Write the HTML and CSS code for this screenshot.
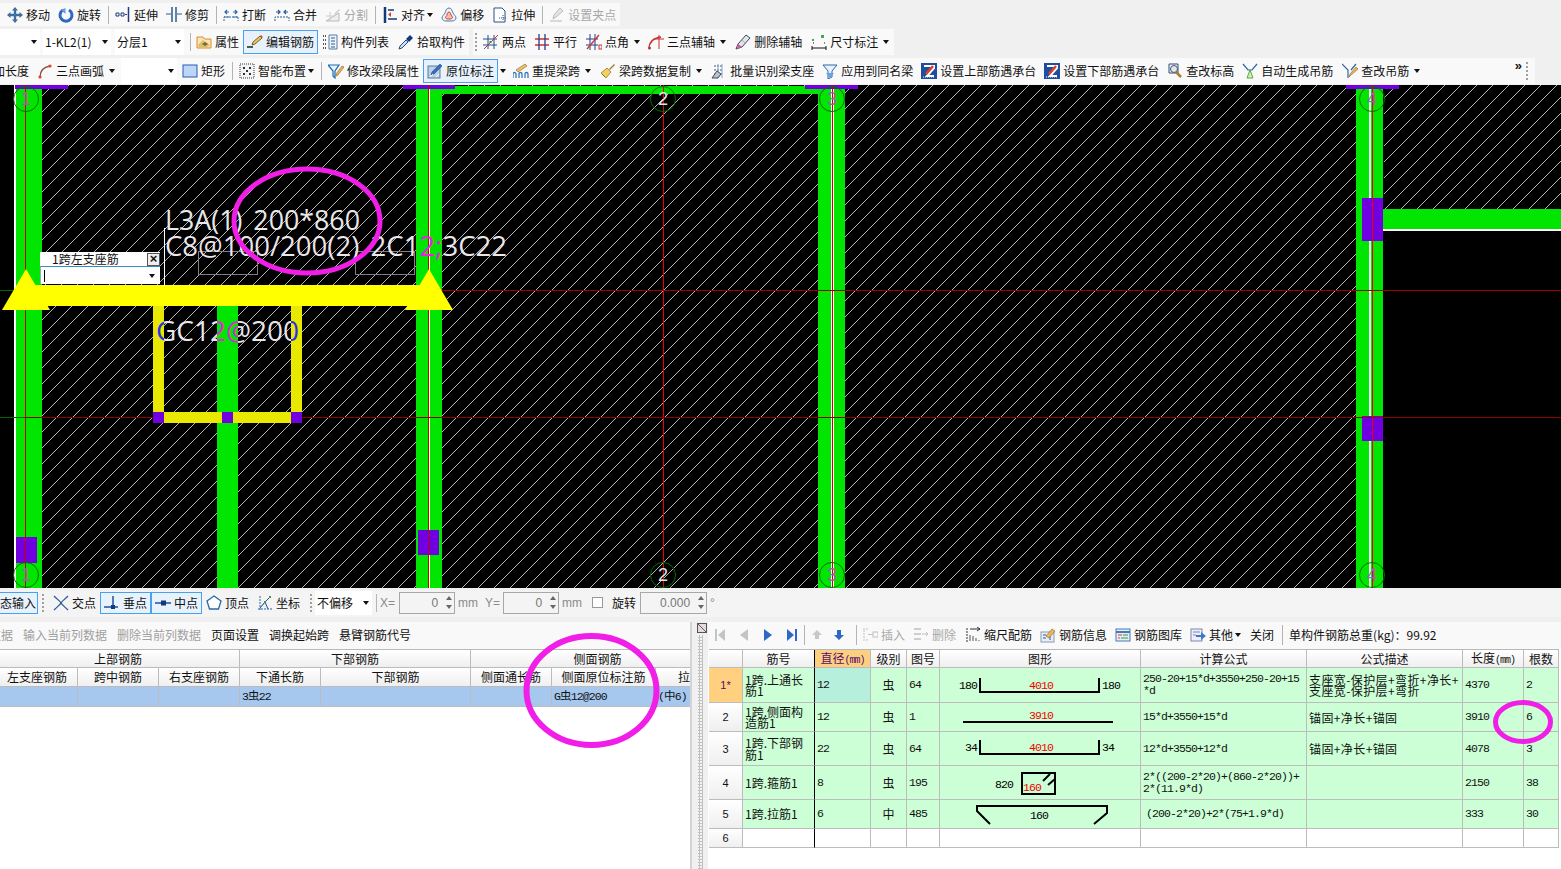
FILE: index.html
```html
<!DOCTYPE html>
<html lang="zh">
<head>
<meta charset="utf-8">
<title>钢筋编辑</title>
<link rel="stylesheet" href="styles.css">
</head>
<body>
<svg class="defs" aria-hidden="true">
<symbol id="i-move" viewBox="0 0 16 16"><path d="M8 0l3 3.500H9.200v3.300h3.300V5L16 8l-3.500 3v-1.800H9.200v3.300H11L8 16l-3-3.500h1.800V9.200H3.500V11L0 8l3.500-3v1.800h3.300V3.500H5z" fill="#3f6f9f"/></symbol>
<symbol id="i-rotate" viewBox="0 0 16 16"><path d="M5 3a6 6 0 1 0 6 0" fill="none" stroke="#2c68c4" stroke-width="3"/><path d="M7.500 1v6L3 3z" fill="#6a98dc"/></symbol>
<symbol id="i-extend" viewBox="0 0 16 16"><path d="M1 6h3v3H1zM6 6h3v3H6z" fill="none" stroke="#1d3f7a"/><path d="M10 7.500h2" stroke="#1d3f7a"/><path d="M13.500 0v15" stroke="#1d3f7a" stroke-width="1.500"/></symbol>
<symbol id="i-trim" viewBox="0 0 16 16"><path d="M6 0v15M10 0v15" stroke="#2c5a94" stroke-width="1.500"/><path d="M0 7h5M11 7h5" stroke="#2c5a94"/></symbol>
<symbol id="i-break" viewBox="0 0 16 16"><path d="M1 14V10h14v4M1 10h5M10 10h5" fill="none" stroke="#2c68a4" stroke-dasharray="2 1"/><path d="M2 5h4M14 5h-4M4 3L2 5l2 2M12 3l2 2-2 2" fill="none" stroke="#2c68a4" stroke-width="1.200"/></symbol>
<symbol id="i-merge" viewBox="0 0 16 16"><path d="M1 14V10h14v4" fill="none" stroke="#2c5a94" stroke-dasharray="2 1"/><path d="M2 5h4M14 5h-4M4 3l2 2-2 2M12 3l-2 2 2 2" fill="none" stroke="#2c5a94" stroke-width="1.200"/></symbol>
<symbol id="i-split" viewBox="0 0 16 16"><path d="M1 14h13V6L1 14z" fill="#eee" stroke="#bbb"/><path d="M9 7l5-5 1 1-5 5z" fill="#ccc"/><path d="M1 9h9M5 5v9" stroke="#ccc"/></symbol>
<symbol id="i-align" viewBox="0 0 16 16"><path d="M3 0v16" stroke="#123a7a" stroke-width="2.500"/><path d="M6 3h6M6 12h9" stroke="#123a7a" stroke-width="1.500"/><path d="M9 5l-3 2.500L9 10z" fill="#d04030"/></symbol>
<symbol id="i-offset" viewBox="0 0 16 16"><path d="M8 1c3 0 3 3 4 5s3 3 3 5-2 3-4 3H5c-2 0-4-1-4-3s2-3 3-5 1-5 4-5z" fill="#eef2f8" stroke="#4d7aa8"/><path d="M8 5c1.500 0 1.500 2 2 3s1.500 1.500 1.500 2.500S10 12 9 12H7c-1 0-2.500-.5-2.500-1.500S6 9 6 8s.5-3 2-3z" fill="#f4c0b0" stroke="#d04030"/></symbol>
<symbol id="i-stretch" viewBox="0 0 16 16"><path d="M2 1h8l3 3v11H2z" fill="#fff" stroke="#2c4f84"/><path d="M7 11h7M11 8v6" stroke="#2c4f84" stroke-dasharray="1 1"/></symbol>
<symbol id="i-grip" viewBox="0 0 16 16"><path d="M1 14h12" stroke="#ccc" stroke-width="1.500"/><path d="M4 12l1-4 6-7 3 3-7 6z" fill="#e4e4e4" stroke="#bbb"/></symbol>
<symbol id="i-attr" viewBox="0 0 16 16"><path d="M1 3h6l1.500 2H15v9H1z" fill="#fbe4b8" stroke="#e08a2c"/><path d="M2 11l5-5 7 5-4 3H3z" fill="#d8c070"/><path d="M6 10l3-2 3 2-3 2z" fill="#7d6a30"/></symbol>
<symbol id="i-edit" viewBox="0 0 16 16"><path d="M0 13h6" stroke="#222" stroke-width="1.500"/><path d="M5 11l1-3 7-6 2 2-7 6z" fill="#e8c466" stroke="#7a6020"/><path d="M13 2l2 2 1-1-2-2z" fill="#c05a40"/></symbol>
<symbol id="i-list" viewBox="0 0 16 16"><path d="M1 2h3M1 6h3M1 10h3M1 14h3" stroke="#555" stroke-dasharray="1 1" stroke-width="2"/><path d="M7 1h8v14H7z" fill="#eef4fb" stroke="#5a7da8"/><path d="M9 4h4M9 7h4M9 10h4M9 13h4" stroke="#2c5a94"/></symbol>
<symbol id="i-pick" viewBox="0 0 16 16"><path d="M1 15l1-3 6-6 2 2-6 6z" fill="#cfe0f4" stroke="#224f90"/><path d="M8 5l4-4 3 3-4 4z" fill="#123a7a"/></symbol>
<symbol id="i-two" viewBox="0 0 16 16"><path d="M0 5h14M0 11h14" stroke="#22508c"/><path d="M5 1v14M11 1v14" stroke="#22508c"/><path d="M1 15L15 1" stroke="#d03030"/><rect x="6.500" y="7" width="2" height="2" fill="#3a9a3a"/></symbol>
<symbol id="i-par" viewBox="0 0 16 16"><path d="M1 5h14M1 11h14" stroke="#d03030" stroke-width="1.300"/><path d="M5 0v16M11 0v16" stroke="#22408c" stroke-width="1.300"/></symbol>
<symbol id="i-ang" viewBox="0 0 16 16"><path d="M0 5h12M0 11h12M4 0v16M9 0v16" stroke="#22408c"/><path d="M1 15L13 1" stroke="#d03030" stroke-width="1.300"/><rect x="13" y="11" width="3" height="4" fill="none" stroke="#d03030"/></symbol>
<symbol id="i-aux" viewBox="0 0 16 16"><path d="M1 15C1 8 5 4 13 3" fill="none" stroke="#d03030" stroke-width="1.300"/><path d="M6 5h10M11 1v14" stroke="#c83030"/><circle cx="1.500" cy="14" r="1.500" fill="#b04030"/></symbol>
<symbol id="i-del" viewBox="0 0 16 16"><path d="M1 15l2-5 8-9 4 3-8 9z" fill="#dfe4ee" stroke="#3a4a6a"/><path d="M3 10l4 3-5 2z" fill="#d45a8a"/><path d="M7 6l3 3" stroke="#e0b040"/></symbol>
<symbol id="i-dim" viewBox="0 0 16 16"><path d="M1 12v4M15 12v4M1 14h14" stroke="#111"/><path d="M2 9h1M2 6h1M13 9h1" stroke="#111"/><rect x="10" y="1" width="3" height="3" fill="#4aa84a"/><rect x="1" y="5" width="2" height="2" fill="#4aa84a"/></symbol>
<symbol id="i-arc" viewBox="0 0 16 16"><path d="M3 14C3 8 7 4 13 3" fill="none" stroke="#8a5040" stroke-width="1.300"/><circle cx="3" cy="14" r="1.600" fill="#e04030"/><circle cx="13" cy="3" r="1.600" fill="#e04030"/></symbol>
<symbol id="i-rect" viewBox="0 0 16 16"><rect x="1" y="2" width="14" height="12" fill="#bcd6f8" stroke="#2c5ab0"/></symbol>
<symbol id="i-smart" viewBox="0 0 16 16"><rect x="1" y="1" width="14" height="14" fill="#f4f4f4" stroke="#333" stroke-dasharray="1 1"/><path d="M4 4h2v2H4zM10 4h2v2h-2zM7 7h2v2H7zM4 10h2v2H4zM10 10h2v2h-2z" fill="#234"/></symbol>
<symbol id="i-funnel" viewBox="0 0 16 16"><path d="M0 2h11L7 8v7l-2-2V8z" fill="#e8f2fc" stroke="#1c6ab4" stroke-width="1.200"/><path d="M8 11l6-8 2 1-6 8-2 1z" fill="#e8b85c" stroke="#8a6020" stroke-width=".6"/></symbol>
<symbol id="i-orig" viewBox="0 0 16 16"><rect x="1" y="3" width="12" height="12" fill="#bcd0e8" stroke="#5a7a9a"/><path d="M4 12l1-3 8-8 2 2-8 8z" fill="#3c6cc0" stroke="#234a90" stroke-width=".6"/><path d="M3 14l3-3M9 14l3-3" stroke="#fff"/></symbol>
<symbol id="i-lift" viewBox="0 0 16 16"><path d="M0 15v-4c0-2 3-2 3 0v4M6 15v-4c0-2 3-2 3 0v4M12 15v-4c0-2 3-2 3 0v4" fill="none" stroke="#3a78b8" stroke-width="1.300"/><path d="M3 7l9-6 2 2-9 6z" fill="#e8c466" stroke="#8a6020" stroke-width=".6"/></symbol>
<symbol id="i-copy" viewBox="0 0 16 16"><path d="M9 6l5-5 1 1-5 5z" fill="#a08040"/><path d="M1 10l6-5 4 4-5 6z" fill="#f0d060" stroke="#8a6a20" stroke-width=".7"/><path d="M2 11l3 3" stroke="#8a6a20"/></symbol>
<symbol id="i-batch" viewBox="0 0 16 16"><path d="M3 3h9M3 7h9M3 11h9" stroke="#2c5a94" stroke-dasharray="2 1"/><path d="M7 1v14M11 1v14" stroke="#8aa4c4"/><path d="M1 15l5-7 4 3-3 4z" fill="#b8c4d4" stroke="#445"/></symbol>
<symbol id="i-apply" viewBox="0 0 16 16"><path d="M1 2h14l-5 6v6l-4 2V8z" fill="#e8f2fc" stroke="#2c68a4"/><path d="M4 10l4 5 4-5z" fill="#6aa4dc"/></symbol>
<symbol id="i-z" viewBox="0 0 16 16"><rect x="0" y="0" width="16" height="16" fill="#1f4f9c"/><path d="M3 3h10v2L6 13h7" fill="none" stroke="#fff" stroke-width="2"/><path d="M5 11l7-8" stroke="#e0402c" stroke-width="2.500"/><path d="M2 14h12" stroke="#fff" stroke-dasharray="1 1"/></symbol>
<symbol id="i-height" viewBox="0 0 16 16"><path d="M2 1h9v9H2z" fill="#eef3fa" stroke="#2c4f84"/><path d="M9 9l5 5" stroke="#a88030" stroke-width="2.500"/><circle cx="7" cy="6" r="3.500" fill="#dde8f4" stroke="#555"/></symbol>
<symbol id="i-auto" viewBox="0 0 16 16"><path d="M1 1l5 6h4l5-6" fill="none" stroke="#2c68a4" stroke-width="1.200"/><path d="M8 7l-3 8h6z" fill="#cfeec4" stroke="#5aa83a"/></symbol>
<symbol id="i-hang" viewBox="0 0 16 16"><path d="M0 1l6 6v8M14 1L9 7" fill="none" stroke="#2c68a4" stroke-width="1.200"/><path d="M7 14l1-3 6-7 2 2-7 6z" fill="#e8b85c" stroke="#8a6020" stroke-width=".6"/></symbol>
<symbol id="i-cross" viewBox="0 0 16 16"><path d="M1 1c4 4 6 5 7 7s3 3 7 7M15 1c-4 4-6 5-7 7s-3 3-7 7" fill="none" stroke="#2c5a94" stroke-width="1.300"/></symbol>
<symbol id="i-perp" viewBox="0 0 16 16"><path d="M0 12h14" stroke="#1c4f9c" stroke-width="1.500"/><path d="M9 1v11" stroke="#1c4f9c" stroke-width="1.500"/><rect x="7" y="10" width="4" height="4" fill="#123a7a"/></symbol>
<symbol id="i-mid" viewBox="0 0 16 16"><path d="M0 8h16" stroke="#1c4f9c" stroke-width="1.500"/><rect x="6" y="5.500" width="5" height="5" fill="#123a7a"/></symbol>
<symbol id="i-vert" viewBox="0 0 16 16"><path d="M8 1l7 5-2.500 8h-9L1 6z" fill="#fff" stroke="#2c68a4" stroke-width="1.300"/></symbol>
<symbol id="i-coord" viewBox="0 0 16 16"><path d="M1 14h14M3 15V1" stroke="#2c68a4" stroke-dasharray="2 1"/><path d="M3 13l5-6 5-5M8 7l3 7" stroke="#1c4f9c"/><rect x="7" y="6" width="2" height="2" fill="#3a9a3a"/><rect x="12" y="1" width="2" height="2" fill="#3a9a3a"/></symbol>
<symbol id="i-first" viewBox="0 0 16 16"><path d="M3 2h2v12H3zM13 2v12L6 8z" fill="#c4c4c4"/></symbol>
<symbol id="i-prev" viewBox="0 0 16 16"><path d="M12 2v12L4 8z" fill="#c4c4c4"/></symbol>
<symbol id="i-next" viewBox="0 0 16 16"><path d="M4 2v12l8-6z" fill="#2c68c4"/></symbol>
<symbol id="i-last" viewBox="0 0 16 16"><path d="M3 2v12l7-6zM11 2h2v12h-2z" fill="#2c68c4"/></symbol>
<symbol id="i-up" viewBox="0 0 16 16"><path d="M8 3l5 5h-3v4H6V8H3z" fill="#c8c8c8"/></symbol>
<symbol id="i-down" viewBox="0 0 16 16"><path d="M6 3h4v5h3l-5 5-5-5h3z" fill="#2c68c4"/></symbol>
<symbol id="i-ins" viewBox="0 0 16 16"><path d="M1 2h5M1 13h5M2 3v9" stroke="#c0c0c0" stroke-dasharray="2 1"/><path d="M6 7.500h5" stroke="#c0c0c0"/><rect x="11" y="5" width="5" height="5" fill="none" stroke="#c0c0c0"/></symbol>
<symbol id="i-rem" viewBox="0 0 16 16"><path d="M1 2h7M1 7h7M1 12h7" stroke="#c0c0c0" stroke-width="1.500"/><path d="M9 7h6M13 5l2 2-2 2" fill="none" stroke="#c0c0c0"/></symbol>
<symbol id="i-scale" viewBox="0 0 16 16"><path d="M2 1v14" stroke="#333" stroke-dasharray="2 1"/><path d="M5 2h10M12 0l3 2-3 2" fill="none" stroke="#333"/><path d="M5 14V8M8 14V9M11 14v-3M14 14v-1" stroke="#556"/></symbol>
<symbol id="i-info" viewBox="0 0 16 16"><rect x="1" y="5" width="13" height="10" fill="#e8eef6" stroke="#8a9ab4"/><path d="M3 8h3M3 11h3M10 8v5" stroke="#2c5a94"/><path d="M6 9l6-7 3 2-6 7z" fill="#e8b85c" stroke="#8a6020" stroke-width=".6"/></symbol>
<symbol id="i-lib" viewBox="0 0 16 16"><rect x="1" y="2" width="14" height="12" fill="#e4eef8" stroke="#4a78b4"/><path d="M1 5h14" stroke="#4a78b4" stroke-width="2"/><path d="M3 8h4M3 11h2" stroke="#d04030"/><path d="M8 8h5M6 11h7" stroke="#3a9a3a"/></symbol>
<symbol id="i-other" viewBox="0 0 16 16"><rect x="1" y="2" width="11" height="12" fill="#eef" stroke="#7a8aa8"/><path d="M3 5h7M3 8h3" stroke="#7a8aa8"/><path d="M6 8h5V5l5 4-5 4v-3H6z" fill="#3a78c8"/></symbol>
</svg>

<div class="app">
  <header class="tops">
    <div class="row row1">
      <div class="bar">
        <div class="tool"><svg class="ic"><use href="#i-move"/></svg>移动</div>
        <div class="tool"><svg class="ic"><use href="#i-rotate"/></svg>旋转</div>
        <i class="sep"></i>
        <div class="tool"><svg class="ic"><use href="#i-extend"/></svg>延伸</div>
        <div class="tool"><svg class="ic"><use href="#i-trim"/></svg>修剪</div>
        <i class="sep"></i>
        <div class="tool"><svg class="ic"><use href="#i-break"/></svg>打断</div>
        <div class="tool"><svg class="ic"><use href="#i-merge"/></svg>合并</div>
        <div class="tool off"><svg class="ic"><use href="#i-split"/></svg>分割</div>
        <i class="sep"></i>
        <div class="tool"><svg class="ic"><use href="#i-align"/></svg>对齐<b class="caret tight"></b></div>
        <div class="tool"><svg class="ic"><use href="#i-offset"/></svg>偏移</div>
        <div class="tool"><svg class="ic"><use href="#i-stretch"/></svg>拉伸</div>
        <i class="sep"></i>
        <div class="tool off"><svg class="ic"><use href="#i-grip"/></svg>设置夹点</div>
      </div>
    </div>
    <div class="row row2">
      <div class="bar">
        <div class="combo c1"><b class="caret"></b></div>
        <div class="combo c2">1-KL2(1)<b class="caret"></b></div>
        <div class="combo c3">分层1<b class="caret"></b></div>
        <i class="sep s2"></i>
        <div class="tool"><svg class="ic"><use href="#i-attr"/></svg>属性</div>
        <div class="tool on"><svg class="ic"><use href="#i-edit"/></svg>编辑钢筋</div>
        <div class="tool"><svg class="ic"><use href="#i-list"/></svg>构件列表</div>
        <div class="tool m1"><svg class="ic"><use href="#i-pick"/></svg>拾取构件</div>
      </div>
      <div class="bar second">
        <i class="grip"></i>
        <div class="tool"><svg class="ic"><use href="#i-two"/></svg>两点</div>
        <div class="tool"><svg class="ic"><use href="#i-par"/></svg>平行</div>
        <div class="tool m1"><svg class="ic"><use href="#i-ang"/></svg>点角<b class="caret"></b></div>
        <div class="tool"><svg class="ic"><use href="#i-aux"/></svg>三点辅轴<b class="caret"></b></div>
        <div class="tool m1"><svg class="ic"><use href="#i-del"/></svg>删除辅轴</div>
        <div class="tool m1"><svg class="ic"><use href="#i-dim"/></svg>尺寸标注<b class="caret"></b></div>
      </div>
    </div>
    <div class="row row3">
      <div class="bar wide">
        <div class="tool cut">加长度</div>
        <div class="tool"><svg class="ic"><use href="#i-arc"/></svg>三点画弧<b class="caret"></b></div>
        <div class="combo c4"><b class="caret"></b></div>
        <div class="tool m1"><svg class="ic"><use href="#i-rect"/></svg>矩形</div>
        <i class="sep"></i>
        <div class="tool"><svg class="ic"><use href="#i-smart"/></svg>智能布置<b class="caret tight"></b></div>
        <i class="sep"></i>
        <div class="tool"><svg class="ic"><use href="#i-funnel"/></svg>修改梁段属性</div>
        <div class="tool on"><svg class="ic"><use href="#i-orig"/></svg>原位标注</div>
        <b class="caret solo"></b>
        <div class="tool"><svg class="ic"><use href="#i-lift"/></svg>重提梁跨<b class="caret"></b></div>
        <div class="tool m1"><svg class="ic"><use href="#i-copy"/></svg>梁跨数据复制<b class="caret"></b></div>
        <div class="tool m1"><svg class="ic"><use href="#i-batch"/></svg>批量识别梁支座</div>
        <div class="tool"><svg class="ic"><use href="#i-apply"/></svg>应用到同名梁</div>
        <div class="tool"><svg class="ic"><use href="#i-z"/></svg>设置上部筋遇承台</div>
        <div class="tool"><svg class="ic"><use href="#i-z"/></svg>设置下部筋遇承台</div>
        <div class="tool"><svg class="ic"><use href="#i-height"/></svg>查改标高</div>
        <div class="tool"><svg class="ic"><use href="#i-auto"/></svg>自动生成吊筋</div>
        <div class="tool m1"><svg class="ic"><use href="#i-hang"/></svg>查改吊筋<b class="caret"></b></div>
        <span class="more">»</span>
        <i class="grip end"></i>
      </div>
    </div>
  </header>

  <main class="canvas">
    <svg class="drawing" viewBox="0 85 1561 503" width="1561" height="503">
      <defs>
        <pattern id="hatch" width="16" height="16" patternUnits="userSpaceOnUse">
          <path d="M0 10L10 0M10 16L16 10" stroke="#b4b4b4" stroke-width="1" shape-rendering="crispEdges"/>
        </pattern>
        <linearGradient id="line2" gradientUnits="userSpaceOnUse" x1="416" y1="0" x2="442" y2="0">
          <stop offset="0" stop-color="#e8e8e8"/><stop offset="0" stop-color="#f020e0"/>
          <stop offset="1" stop-color="#f020e0"/><stop offset="1" stop-color="#e8e8e8"/>
        </linearGradient>
        <linearGradient id="line3" gradientUnits="userSpaceOnUse" x1="150" y1="0" x2="310" y2="0">
          <stop offset=".0875" stop-color="#2a30f0"/><stop offset=".0875" stop-color="#e8e8e8"/>
          <stop offset=".41875" stop-color="#e8e8e8"/><stop offset=".41875" stop-color="#f020e0"/>
          <stop offset=".55" stop-color="#f020e0"/><stop offset=".55" stop-color="#e8e8e8"/>
          <stop offset=".88125" stop-color="#e8e8e8"/><stop offset=".88125" stop-color="#2a30f0"/>
        </linearGradient>
      </defs>
      <rect x="0" y="85" width="1561" height="503" fill="#000"/>
      <rect x="42" y="85" width="1314" height="503" fill="url(#hatch)"/>
      <rect x="1384" y="85" width="177" height="124" fill="url(#hatch)"/>

      <g fill="#00e600">
        <rect x="16" y="85" width="26" height="503"/>
        <rect x="416" y="85" width="26" height="503"/>
        <rect x="818" y="85" width="27" height="503"/>
        <rect x="1356" y="85" width="27" height="503"/>
        <rect x="217" y="300" width="21" height="288"/>
        <rect x="442" y="86" width="376" height="8"/>
        <rect x="1383" y="209" width="178" height="20"/>
      </g>
      <g fill="#fff">
        <rect x="14" y="85" width="2" height="503"/>
        <rect x="429" y="85" width="1" height="503"/>
        <rect x="831" y="85" width="3" height="503"/>
        <rect x="1369" y="85" width="2" height="503"/>
        <rect x="1371" y="229" width="190" height="2"/>
      </g>
      <g fill="#7000e0">
        <rect x="15" y="85" width="53" height="4"/>
        <rect x="403" y="85" width="52" height="4"/>
        <rect x="805" y="85" width="53" height="4"/>
        <rect x="1346" y="85" width="53" height="4"/>
        <rect x="1362" y="198" width="21" height="43"/>
        <rect x="1362" y="416" width="21" height="25"/>
        <rect x="16" y="537" width="21" height="26"/>
        <rect x="418" y="530" width="21" height="25"/>
      </g>
      <g shape-rendering="crispEdges" stroke-width="1" fill="none">
        <path d="M25.500 85v503" stroke="#c80000"/>
        <path d="M428.500 85v503" stroke="#c80000"/>
        <path d="M832.500 85v503" stroke="#c80000"/>
        <path d="M1372.500 85v503" stroke="#f00000"/>
        <path d="M663.500 85v503" stroke="#f00000"/>
        <path d="M429 290.500h1132" stroke="#a00000"/>
        <path d="M25 417.500h1536" stroke="#900000"/>
        <path d="M0 290.500h25M0 417.500h25" stroke="#006400"/>
      </g>

      <g fill="none" stroke="#007000" stroke-width="1">
        <circle cx="26" cy="99" r="12.500"/><circle cx="663" cy="99" r="12.500"/><circle cx="832" cy="99" r="12.500"/><circle cx="1372" cy="99" r="12.500"/>
        <circle cx="26" cy="575" r="12.500"/><circle cx="663" cy="575" r="12.500"/><circle cx="832" cy="575" r="12.500"/><circle cx="1372" cy="575" r="12.500"/>
      </g>
      <g class="axis">
        <text x="26" y="105">1</text><text x="663" y="105" class="white">2</text><text x="832" y="105">3</text><text x="1372" y="105">4</text>
        <text x="26" y="581">1</text><text x="663" y="581" class="white">2</text><text x="832" y="581">3</text><text x="1372" y="581">4</text>
      </g>

      <g fill="#e8e800">
        <rect x="153" y="306" width="11" height="117"/>
        <rect x="291" y="306" width="11" height="117"/>
        <rect x="153" y="412" width="149" height="11"/>
      </g>
      <g fill="#7000e0">
        <rect x="153" y="412" width="11" height="11"/><rect x="222" y="412" width="11" height="11"/><rect x="291" y="412" width="11" height="11"/>
      </g>
      <g fill="#ffff00">
        <rect x="33" y="285" width="396" height="21"/>
        <path d="M26 269L50 310H2z"/>
        <path d="M429 269L453 310H405z"/>
      </g>
      <path d="M166 228.500h-1.500v57" fill="none" stroke="#fff" stroke-width="1" shape-rendering="crispEdges"/>
      <g fill="none" stroke="#808080" shape-rendering="crispEdges">
        <rect x="198.500" y="251.500" width="59" height="23"/>
        <rect x="355.500" y="251.500" width="59" height="23"/>
      </g>
      <text class="note" x="165" y="230" textLength="195" lengthAdjust="spacingAndGlyphs">L3A(1) 200*860</text>
      <text class="note l2" x="165" y="256" textLength="342" lengthAdjust="spacingAndGlyphs">C8@100/200(2) 2C12;3C22</text>
      <text class="note l3" x="156" y="341" textLength="143" lengthAdjust="spacingAndGlyphs">GC12@200</text>
    </svg>
    <div class="popup">
      <div class="popup-title">1跨左支座筋<span class="popup-x">×</span></div>
      <div class="popup-input"><i class="cursor"></i><b class="caret"></b></div>
    </div>
  </main>

  <div class="row status">
    <div class="bar">
      <div class="tool on lead">态输入</div>
      <i class="grip g1"></i>
      <div class="tool"><svg class="ic"><use href="#i-cross"/></svg>交点</div>
      <div class="tool on"><svg class="ic"><use href="#i-perp"/></svg>垂点</div>
      <div class="tool on"><svg class="ic"><use href="#i-mid"/></svg>中点</div>
      <div class="tool"><svg class="ic"><use href="#i-vert"/></svg>顶点</div>
      <div class="tool"><svg class="ic"><use href="#i-coord"/></svg>坐标</div>
      <i class="grip g2"></i>
      <div class="combo c5">不偏移<b class="caret"></b></div>
      <i class="sep s3"></i>
      <span class="lbl x">X=</span>
      <div class="spin">0<span class="arrows"><b class="up"></b><b class="dn"></b></span></div>
      <span class="lbl mm">mm</span>
      <span class="lbl y">Y=</span>
      <div class="spin">0<span class="arrows"><b class="up"></b><b class="dn"></b></span></div>
      <span class="lbl mm">mm</span>
      <i class="check"></i>
      <span class="rot">旋转</span>
      <div class="spin deg">0.000<span class="arrows"><b class="up"></b><b class="dn"></b></span></div>
      <span class="lbl degmark">°</span>
    </div>
  </div>

  <section class="bottom">
    <div class="pane left">
      <div class="pane-tools">
        <span class="link off first">数据</span>
        <span class="link off">输入当前列数据</span>
        <span class="link off">删除当前列数据</span>
        <span class="link">页面设置</span>
        <span class="link">调换起始跨</span>
        <span class="link">悬臂钢筋代号</span>
      </div>
      <table class="grid ltable">
        <colgroup><col class="w81"><col class="w81"><col class="w81"><col class="w81"><col class="w150"><col class="w81"><col class="w104"><col class="w69"></colgroup>
        <tr class="h18"><th colspan="3">上部钢筋</th><th colspan="2">下部钢筋</th><th colspan="3">侧面钢筋</th></tr>
        <tr class="h19"><th>左支座钢筋</th><th>跨中钢筋</th><th>右支座钢筋</th><th>下通长筋</th><th>下部钢筋</th><th>侧面通长筋</th><th>侧面原位标注筋</th><th>拉筋</th></tr>
        <tr class="h20 sel"><td></td><td></td><td></td><td class="num">3虫22</td><td></td><td></td><td class="num">G虫12@200</td><td class="num">(中6)</td></tr>
      </table>
    </div>

    <div class="divider"><span class="close-box"></span></div>

    <div class="pane right">
      <div class="pane-tools rtools">
        <svg class="ic nav"><use href="#i-first"/></svg>
        <svg class="ic nav"><use href="#i-prev"/></svg>
        <svg class="ic nav"><use href="#i-next"/></svg>
        <svg class="ic nav"><use href="#i-last"/></svg>
        <i class="sep sa"></i>
        <svg class="ic nav n2"><use href="#i-up"/></svg>
        <svg class="ic nav n2"><use href="#i-down"/></svg>
        <i class="sep sb"></i>
        <div class="tool off"><svg class="ic"><use href="#i-ins"/></svg>插入</div>
        <div class="tool off"><svg class="ic"><use href="#i-rem"/></svg>删除</div>
        <div class="tool m1"><svg class="ic"><use href="#i-scale"/></svg>缩尺配筋</div>
        <div class="tool"><svg class="ic"><use href="#i-info"/></svg>钢筋信息</div>
        <div class="tool"><svg class="ic"><use href="#i-lib"/></svg>钢筋图库</div>
        <div class="tool"><svg class="ic"><use href="#i-other"/></svg>其他<b class="caret tight"></b></div>
        <div class="tool m1">关闭</div>
        <i class="sep sc"></i>
        <span class="total">单构件钢筋总重(kg)：99.92</span>
      </div>
      <table class="grid rtable">
        <colgroup><col class="w34"><col class="w72"><col class="w56"><col class="w36"><col class="w33"><col class="w201"><col class="w166"><col class="w156"><col class="w61"><col class="w35"></colgroup>
        <tr class="h18"><th></th><th class="rule">筋号</th><th class="active">直径<small>(mm)</small></th><th>级别</th><th>图号</th><th>图形</th><th>计算公式</th><th>公式描述</th><th>长度<small>(mm)</small></th><th>根数</th></tr>
        <tr class="h35 data">
          <th class="idx cur">1*</th><td class="rule name">1跨.上通长筋1</td><td class="num focus">12</td><td class="mid">虫</td><td class="num">64</td>
          <td class="shape"><svg width="200" height="33" viewBox="0 0 200 33"><polyline points="40,9 40,23 159,23 159,9"/><text x="19" y="20">180</text><text x="101" y="20" class="red ctr">4010</text><text x="162" y="20">180</text></svg></td>
          <td class="num">250-20+15*d+3550+250-20+15 *d</td><td class="desc">支座宽-保护层+弯折+净长+<br>支座宽-保护层+弯折</td><td class="num">4370</td><td class="num">2</td>
        </tr>
        <tr class="h29 data">
          <th class="idx">2</th><td class="rule name">1跨.侧面构造筋1</td><td class="num">12</td><td class="mid">虫</td><td class="num">1</td>
          <td class="shape"><svg width="200" height="28" viewBox="0 0 200 28"><line x1="23" y1="19" x2="173" y2="19"/><text x="101" y="16" class="red ctr">3910</text></svg></td>
          <td class="num">15*d+3550+15*d</td><td class="desc">锚固+净长+锚固</td><td class="num">3910</td><td class="num">6</td>
        </tr>
        <tr class="h34 data">
          <th class="idx">3</th><td class="rule name">1跨.下部钢筋1</td><td class="num">22</td><td class="mid">虫</td><td class="num">64</td>
          <td class="shape"><svg width="200" height="33" viewBox="0 0 200 33"><polyline points="40,8 40,22 159,22 159,8"/><text x="25" y="19">34</text><text x="101" y="19" class="red ctr">4010</text><text x="162" y="19">34</text></svg></td>
          <td class="num">12*d+3550+12*d</td><td class="desc">锚固+净长+锚固</td><td class="num">4078</td><td class="num">3</td>
        </tr>
        <tr class="h34 data">
          <th class="idx">4</th><td class="rule name">1跨.箍筋1</td><td class="num">8</td><td class="mid">虫</td><td class="num">195</td>
          <td class="shape"><svg width="200" height="33" viewBox="0 0 200 33"><rect x="82" y="7" width="33" height="21"/><line x1="103" y1="15" x2="110" y2="8"/><line x1="108" y1="19" x2="115" y2="13"/><text x="55" y="22">820</text><text x="83" y="25" class="red">160</text></svg></td>
          <td class="num">2*((200-2*20)+(860-2*20))+ 2*(11.9*d)</td><td></td><td class="num">2150</td><td class="num">38</td>
        </tr>
        <tr class="h29 data">
          <th class="idx">5</th><td class="rule name">1跨.拉筋1</td><td class="num">6</td><td class="mid">中</td><td class="num">485</td>
          <td class="shape"><svg width="200" height="28" viewBox="0 0 200 28"><polyline points="50,24 37,11 37,6 167,6 167,13 154,24"/><text x="99" y="19" class="ctr">160</text></svg></td>
          <td class="num pad">(200-2*20)+2*(75+1.9*d)</td><td></td><td class="num">333</td><td class="num">30</td>
        </tr>
        <tr class="h19">
          <th class="idx">6</th><td class="rule"></td><td></td><td></td><td></td><td></td><td></td><td></td><td></td><td></td>
        </tr>
      </table>
    </div>
  </section>
</div>

<svg class="marks" viewBox="0 0 1561 869" width="1561" height="869" aria-hidden="true">
  <ellipse cx="307" cy="221" rx="73" ry="52" stroke-width="5"/>
  <ellipse cx="591.500" cy="690.500" rx="65" ry="54.500" stroke-width="6"/>
  <ellipse cx="1523" cy="722" rx="27.500" ry="19.500" stroke-width="5"/>
</svg>
</body>
</html>
```

FILE: styles.css
```css
* { box-sizing: border-box; }
html, body { margin: 0; padding: 0; }
body {
  position: relative;
  width: 1561px;
  height: 869px;
  overflow: hidden;
  background: #f0f0f0;
  color: #111;
  font: 12px/16px "Noto Sans CJK SC", "Liberation Sans", sans-serif;
}
.defs { position: absolute; width: 0; height: 0; }
.app { display: flex; flex-direction: column; width: 1561px; height: 869px; }

/* toolbars */
.tops { height: 85px; flex: none; }
.row { display: flex; overflow: hidden; }
.row1 { height: 28px; padding-top: 3px; }
.row2 { height: 28px; padding-top: 1px; }
.row3 { height: 29px; padding-top: 2px; }
.bar { display: flex; align-items: center; background: #f9f9f9; height: 26px; }
.row1 .bar { height: 23px; padding-left: 3px; width: 620px; }
.second { margin-left: 4px; padding-left: 2px; width: 421px; }
.wide { width: 1535px; flex: none; }

.tool {
  display: flex;
  align-items: center;
  flex: none;
  gap: 3px;
  height: 22px;
  padding: 0 4px;
  white-space: nowrap;
}
.ic { width: 16px; height: 16px; flex: none; display: block; }
.tool.on { height: 24px; background: #e8f2fc; box-shadow: inset 0 0 0 1px #4aa0ee; }
.tool.off { color: #a8a8a8; }
.tool.m1 { margin-left: 1px; }
.tool.cut { margin-left: -11px; }
.sep { flex: none; width: 1px; height: 18px; margin: 0 2px 0 3px; background: #b4b4b4; }
.sep.s2 { margin: 0 1px 0 6px; }
.sep.s3 { margin: 0 3px 0 4px; }
.caret {
  flex: none;
  width: 0;
  height: 0;
  margin-left: 2px;
  border: 3px solid transparent;
  border-top: 4px solid #111;
  border-bottom: 0;
}
.caret.tight { margin-left: -1px; }
.caret.solo { margin: 0 3px 0 2px; }
.grip { flex: none; width: 3px; height: 18px; border-left: 2px dotted #a0a0a0; }
.second .grip { margin-right: 1px; }
.grip.end { margin-left: 4px; margin-right: 6px; }
.more { margin-left: auto; font: 700 13px/16px "Liberation Sans", sans-serif; transform: translateY(-5px); }

.combo { display: flex; align-items: center; justify-content: space-between; flex: none; height: 26px; background: #fff; padding: 0 2px; }
.combo .caret { margin-right: 1px; }
.c1 { width: 40px; justify-content: flex-end; }
.c2 { width: 68px; margin-left: 3px; }
.c3 { width: 69px; margin-left: 4px; }
.c4 { width: 56px; margin-left: 2px; justify-content: flex-end; }
.c5 { width: 57px; height: 24px; margin-left: 2px; }

/* canvas */
.canvas { position: relative; flex: none; height: 503px; background: #000; overflow: hidden; }
.drawing { display: block; }
.axis text { font: 18px "Liberation Sans", sans-serif; text-anchor: middle; fill: #a060a8; }
.axis text.white { fill: #d8e8ec; }
.note { font: 27px "Open Sans", "Liberation Sans", sans-serif; fill: #e8e8e8; word-spacing: 4px; }
.note.l2 { fill: url(#line2); }
.note.l3 { fill: url(#line3); }
.popup { position: absolute; left: 40px; top: 167px; width: 120px; height: 32px; background: #fff; }
.popup-title { position: relative; height: 14px; padding-left: 12px; font-size: 12px; line-height: 14px; }
.popup-x {
  position: absolute;
  right: 0;
  top: 1px;
  width: 13px;
  height: 13px;
  border: 1px solid #555;
  font: 700 13px/10px "Liberation Sans", sans-serif;
  text-align: center;
  background: #eee;
}
.popup-input { display: flex; align-items: center; justify-content: space-between; height: 18px; border-top: 1px solid #3a8ac0; border-left: 1px solid #9ac; padding: 0 5px 0 3px; }
.cursor { width: 1px; height: 12px; background: #000; }

/* status */
.status { flex: none; height: 34px; padding-top: 2px; }
.status .bar { height: 27px; width: 100%; padding-bottom: 2px; background: #f4f4f4; }
.status .tool.on { height: 22px; }
.tool.lead { margin-left: -2px; padding: 0 2px; width: 40px; }
.grip.g1 { margin: 0 4px 0 4px; }
.grip.g2 { margin: 0 0 0 6px; }
.lbl { flex: none; color: #8a8a8a; font: 12px/16px "Liberation Sans", sans-serif; }
.lbl.x { width: 16px; margin-right: 3px; }
.lbl.mm { width: 22px; margin-left: 3px; }
.lbl.y { width: 15px; margin-left: 5px; margin-right: 3px; }
.spin {
  position: relative;
  flex: none;
  width: 56px;
  height: 22px;
  padding-right: 16px;
  border: 1px solid #a8a8a8;
  color: #777;
  text-align: right;
  line-height: 20px;
  font-family: "Liberation Sans", sans-serif;
}
.spin.deg { width: 67px; }
.arrows { position: absolute; right: 2px; top: 3px; display: flex; flex-direction: column; gap: 5px; }
.arrows b { width: 0; height: 0; border: 3px solid transparent; }
.arrows .up { border-top: 0; border-bottom: 4px solid #666; }
.arrows .dn { border-bottom: 0; border-top: 4px solid #666; }
.check { flex: none; width: 11px; height: 11px; margin: 0 9px 0 8px; border: 1px solid #999; background: #fff; }
.rot { flex: none; margin-right: 4px; }
.lbl.degmark { margin-left: 3px; }

/* bottom panes */
.bottom { display: flex; flex: none; height: 247px; }
.pane { overflow: hidden; background: #fff; }
.left { width: 690px; flex: none; }
.right { flex: 1; }
.pane-tools { display: flex; align-items: center; height: 27px; padding-bottom: 2px; background: #f9f9f9; }
.link { flex: none; margin-right: 10px; }
.link.off { color: #a0a0a0; }
.link.first { margin-left: -11px; }
.divider {
  position: relative;
  flex: none;
  width: 18px;
  background-color: #f4f4f4;
  background-image: radial-gradient(circle, #c0c0c0 1px, transparent 1.200px);
  background-size: 3px 3px;
  background-position: 6px 14px;
  background-repeat: repeat;
  background-clip: content-box;
  padding: 13px 5px 0 6px;
  border-left: 2px solid #d4d4d4;
}
.close-box {
  position: absolute;
  left: 5px;
  top: 1px;
  width: 10px;
  height: 10px;
  background: linear-gradient(45deg, #ddd 45%, #a04040 50%, #ddd 55%), #ddd;
  border: 1px solid #555;
}
.rtools .nav { width: 16px; margin: 0 4px; }
.rtools .nav.n2 { margin: 0 3px; }
.rtools .sep { height: 20px; }
.rtools .sep.sa { margin: 0 1px 0 0; }
.rtools .sep.sb { margin: 0 1px 0 6px; }
.rtools .sep.sc { margin: 0 3px 0 4px; }
.total { flex: none; margin-left: 3px; }

/* grids */
.grid { border-collapse: separate; border-spacing: 0; table-layout: fixed; background: #fff; border-top: 1px solid #b8b8b8; }
.ltable { width: 728px; margin-left: -3px; }
.rtable { width: 850px; margin-left: 1px; }
.w33 { width: 33px; } .w34 { width: 34px; } .w35 { width: 35px; } .w36 { width: 36px; }
.w56 { width: 56px; } .w61 { width: 61px; } .w69 { width: 69px; } .w72 { width: 72px; }
.w81 { width: 81px; } .w104 { width: 104px; } .w150 { width: 150px; } .w156 { width: 156px; }
.w166 { width: 166px; } .w201 { width: 201px; }
.grid th, .grid td {
  padding: 0;
  border-right: 1px solid #bcbcbc;
  border-bottom: 1px solid #bcbcbc;
  overflow: hidden;
  font-size: 12px;
  line-height: 11.500px;
}
.grid th {
  font-weight: 400;
  text-align: center;
  background: linear-gradient(#ffffff, #efefef);
}
.h18 { height: 18px; } .h19 { height: 19px; } .h20 { height: 20px; }
.h29 { height: 29px; } .h34 { height: 34px; } .h35 { height: 35px; }
.sel td { background: #a6c8ee; }
.grid small { font: 10px "Liberation Mono", monospace; letter-spacing: -1px; }
.grid th.active { background: #fdd081; color: #5a0a6a; }
.grid .rule { border-right-color: #000; }
.grid .data td { background: #ccffd6; }
.grid .data td.focus { background: #b6f0dc; }
.grid th.idx { font: 11px "Liberation Sans", sans-serif; }
.grid th.cur { background: #ffd080; color: #5a0a6a; }
.grid td.name { padding: 0 1px 0 2px; }
.grid td.num, .shape text {
  font-family: "Liberation Mono", "Noto Sans CJK SC", monospace;
  font-size: 11.500px;
  letter-spacing: -.9px;
  line-height: 12px;
}
.grid td.num { padding-left: 2px; }
.grid td.pad { padding-left: 5px; }
.grid td.mid { text-align: center; }
.grid td.desc { padding-left: 2px; line-height: 11px; letter-spacing: .4px; }
.shape svg { display: block; }
.shape polyline, .shape line, .shape rect { fill: none; stroke: #000; stroke-width: 2; }
.shape text { fill: #000; }
.shape text.red { fill: #f00000; }
.shape text.ctr { text-anchor: middle; }

/* hand-drawn circles over everything */
.marks { position: absolute; left: 0; top: 0; pointer-events: none; }
.marks ellipse { fill: none; stroke: #f01ee6; }
```
